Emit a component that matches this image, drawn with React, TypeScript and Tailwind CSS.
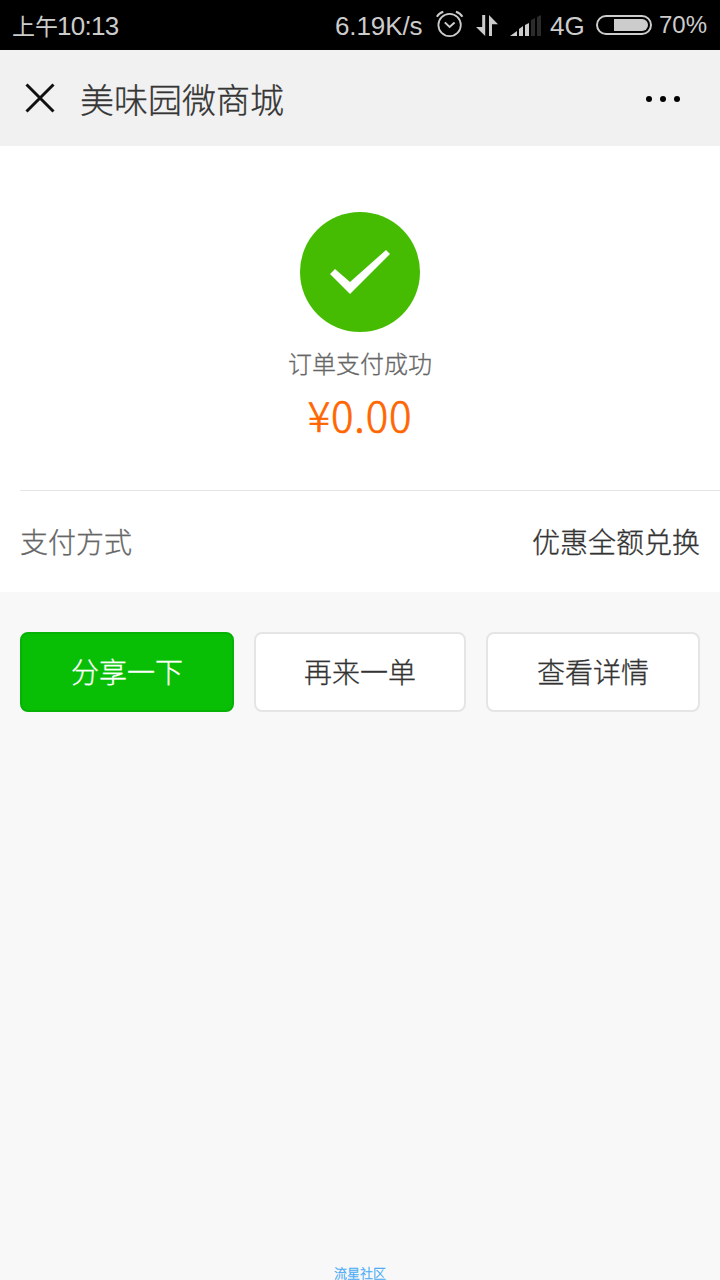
import React from "react";

const CJK = "font-['Noto_Sans_CJK_SC',sans-serif] font-light [-webkit-text-stroke:0.3px]";

function AlarmIcon() {
  return (
    <svg className="block h-7 w-[28px]" viewBox="0 0 28 28" fill="none" stroke="#ccc" strokeWidth="1.8">
      <circle cx="13.6" cy="15" r="11.2" />
      <path d="M8.800 12.400l4.800 4.600 5-4.600" strokeWidth="2" />
      <path d="M.8 6.800c1.500-2.500 3.600-4.200 6.500-5M26.400 6.800c-1.500-2.500-3.600-4.200-6.500-5" strokeWidth="2" />
    </svg>
  );
}

function TransferIcon() {
  return (
    <svg className="block h-[22px] w-[22px]" viewBox="0 0 22 22" fill="#ccc">
      <path d="M6.200 0h3v21L0 12h6.200z" />
      <path d="M13 21h3V9.200h6L13 0z" />
    </svg>
  );
}

function SignalIcon() {
  return (
    <svg className="block h-[22px] w-[32px]" viewBox="0 0 32 22" fill="#ccc">
      <path d="M0 21L7 16v5zM9 14l4-3v10H9zM15 10l4-2v13h-4z" />
      <path d="M21 5l4-2v18h-4zM27 2l4-2v21h-4z" fill="#2b2b2b" />
    </svg>
  );
}

function BatteryIcon() {
  return (
    <svg className="block h-5 w-14" viewBox="0 0 56 20">
      <rect x="1" y="1" width="54" height="18" rx="9" fill="none" stroke="#ccc" strokeWidth="2" />
      <path d="M18 4h28a6 6 0 0 1 0 12H18z" fill="#ccc" />
    </svg>
  );
}

function StatusBar() {
  return (
    <header className="flex h-[50px] shrink-0 items-start bg-black font-['Liberation_Sans','Noto_Sans_CJK_SC',sans-serif] font-normal text-[#ccc] [-webkit-text-stroke:0px]">
      <div className="ml-3 mt-[10px] flex h-8 items-start whitespace-nowrap">
        <span className="w-[45px] font-['Noto_Sans_CJK_SC',sans-serif] text-[23px] leading-[30px]">上午</span>
        <span className="font-['Liberation_Sans',sans-serif] text-[26px] leading-8 tracking-[-0.7px]">10:13</span>
      </div>
      <span className="ml-auto mt-[10px] w-[101px] whitespace-nowrap text-[26px] leading-8 tracking-[-0.1px]">6.19K/s</span>
      <div className="mt-[10px]"><AlarmIcon /></div>
      <div className="ml-[12px] mt-[15px]"><TransferIcon /></div>
      <div className="ml-[12px] mt-[15px]"><SignalIcon /></div>
      <span className="ml-2 mt-[10px] w-[46px] whitespace-nowrap text-[26px] leading-8">4G</span>
      <div className="mt-[15px]"><BatteryIcon /></div>
      <span className="ml-[7px] mr-[12px] mt-[9px] w-[49px] whitespace-nowrap text-[24px] leading-8">70%</span>
    </header>
  );
}

function TitleBar() {
  return (
    <div className="flex h-24 shrink-0 items-center bg-[#f1f1f1] pl-[25px] pr-[39px]">
      <svg className="h-[30px] w-[30px]" viewBox="0 0 30 30" stroke="#111" strokeWidth="3">
        <path d="M1.500 1.500l27 27M28.500 1.500l-27 27" />
      </svg>
      <h1 className="ml-[25px] flex-1 pt-[2px] text-[34px] leading-[48px] text-[#353535]">美味园微商城</h1>
      <svg className="h-[6px] w-[36px] translate-y-px" viewBox="0 0 36 6">
        <circle cx="4" cy="3" r="3" />
        <circle cx="18" cy="3" r="3" />
        <circle cx="32" cy="3" r="3" />
      </svg>
    </div>
  );
}

export default function App() {
  return (
    <div className={`flex h-[1280px] w-[720px] flex-col overflow-hidden bg-[#f8f8f8] ${CJK}`}>
      <StatusBar />
      <TitleBar />
      <main className="flex flex-1 flex-col">
        <section className="flex h-[446px] flex-col bg-white pl-5">
          <div className="flex h-[345px] flex-col items-center border-b border-[#e5e5e5] pr-5 pt-[66px]">
            <svg className="block h-[120px] w-[120px] shrink-0" viewBox="0 0 120 120">
              <circle cx="60" cy="60" r="60" fill="#45bc02" />
              <path d="M30 62l5-5 15 13 36-32 4 4-40 40z" fill="#fff" />
            </svg>
            <p className="mt-[13px] text-[24px] leading-9 text-[#666]">订单支付成功</p>
            <p className="mt-[8px] text-[42px] leading-[50px] tracking-[0.8px] text-[#ff6600] [-webkit-text-stroke:0.7px]">¥0.00</p>
          </div>
          <div className="flex flex-1 items-center justify-between pb-[2px] pr-5 text-[28px]">
            <span className="text-[#666]">支付方式</span>
            <span className="text-[#333]">优惠全额兑换</span>
          </div>
        </section>
        <nav className="flex gap-5 px-5 pt-10 text-[28px] leading-10 text-[#333]">
          <button className="h-20 w-[214px] rounded-lg border-2 border-[#06b206] bg-[#09bf05] pb-[2px] text-white">分享一下</button>
          <button className="h-20 w-[212px] rounded-lg border-2 border-[#e5e5e5] bg-white pb-[2px]">再来一单</button>
          <button className="h-20 w-[214px] rounded-lg border-2 border-[#e5e5e5] bg-white pb-[2px]">查看详情</button>
        </nav>
        <footer className="mt-auto text-center text-[13px] leading-[14px] text-[#42a9f5]">流星社区</footer>
      </main>
    </div>
  );
}
